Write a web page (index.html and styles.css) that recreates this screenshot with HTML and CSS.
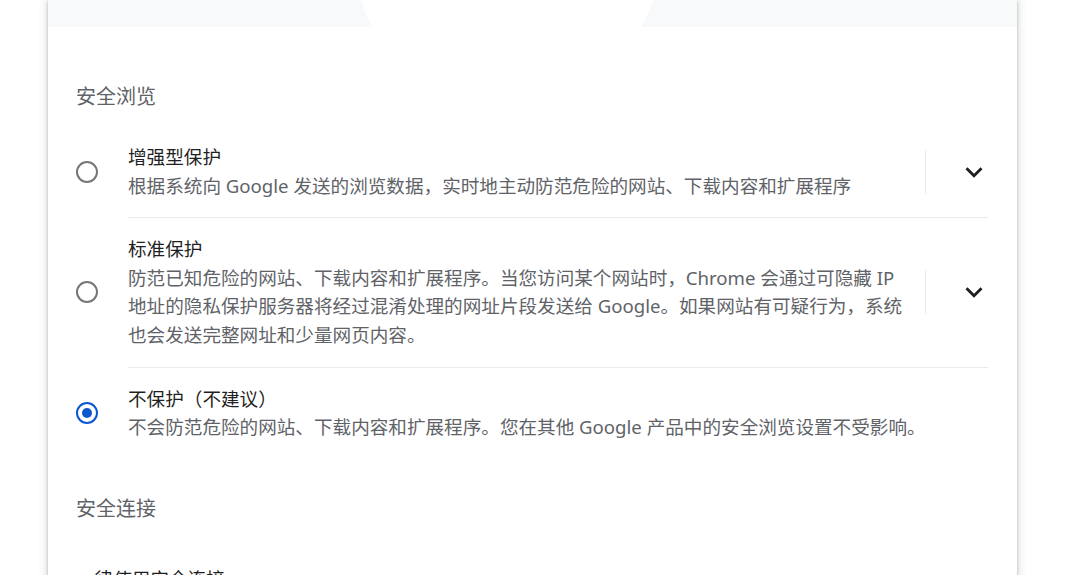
FILE: index.html
```html
<!DOCTYPE html>
<html lang="zh-CN">
<head>
<meta charset="utf-8">
<title>安全</title>
<link rel="stylesheet" href="styles.css">
</head>
<body>
<div class="card">
  <div class="band">
    <svg class="tab" width="969" height="27" viewBox="0 0 969 27" aria-hidden="true">
      <path d="M313,0 C316,9 319,19 324,27 L593,27 C598,19 602,9 605,0 Z" fill="#ffffff"/>
    </svg>
  </div>

  <h2 class="section-title first">安全浏览</h2>

  <div class="row">
    <span class="radio"></span>
    <div class="content">
      <div class="text">
        <div class="label">增强型保护</div>
        <div class="desc">根据系统向 Google 发送的浏览数据，实时地主动防范危险的网站、下载内容和扩展程序</div>
      </div>
      <span class="sep"></span>
      <svg class="chev" width="34" height="34" viewBox="0 0 24 24" aria-hidden="true"><path d="M16.59 8.59L12 13.17 7.41 8.59 6 10l6 6 6-6z" fill="#1f1f1f"/></svg>
    </div>
  </div>

  <div class="row">
    <span class="radio"></span>
    <div class="content bordered">
      <div class="text">
        <div class="label">标准保护</div>
        <div class="desc">防范已知危险的网站、下载内容和扩展程序。当您访问某个网站时，Chrome 会通过可隐藏 IP 地址的隐私保护服务器将经过混淆处理的网址片段发送给 Google。如果网站有可疑行为，系统也会发送完整网址和少量网页内容。</div>
      </div>
      <span class="sep"></span>
      <svg class="chev" width="34" height="34" viewBox="0 0 24 24" aria-hidden="true"><path d="M16.59 8.59L12 13.17 7.41 8.59 6 10l6 6 6-6z" fill="#1f1f1f"/></svg>
    </div>
  </div>

  <div class="row">
    <span class="radio checked"></span>
    <div class="content bordered">
      <div class="text">
        <div class="label">不保护（不建议）</div>
        <div class="desc">不会防范危险的网站、下载内容和扩展程序。您在其他 Google 产品中的安全浏览设置不受影响。</div>
      </div>
    </div>
  </div>

  <h2 class="section-title second">安全连接</h2>

  <div class="plain-row">
    <div class="label">一律使用安全连接</div>
  </div>
</div>
</body>
</html>
```

FILE: styles.css
```css
html, body {
  margin: 0;
  padding: 0;
  background: #ffffff;
  overflow: hidden;
  height: 575px;
}

body {
  font-family: "Noto Sans", "Noto Sans CJK SC", sans-serif;
  font-size: 18.6px;
  line-height: 28.6px;
  color: #5f6368;
}

.card {
  margin-left: 48px;
  width: 969px;
  height: 700px;
  background: #ffffff;
  box-shadow: 0 1px 3px rgba(60, 64, 67, 0.3), 0 2px 8px 2px rgba(60, 64, 67, 0.15);
}

.band {
  position: relative;
  height: 27px;
  background: #f8f9fa;
}

.tab {
  position: absolute;
  left: 0;
  top: 0;
  display: block;
}

.section-title {
  margin: 0;
  padding-left: 28px;
  font-size: 20px;
  line-height: 28px;
  font-weight: 400;
  color: #5f6368;
}

.section-title.first {
  margin-top: 56px;
  margin-bottom: 15px;
}

.section-title.second {
  margin-top: 36px;
}

.row {
  display: flex;
  align-items: center;
  padding-left: 28px;
  padding-right: 29px;
}

.radio {
  flex: none;
  box-sizing: border-box;
  width: 22px;
  height: 22px;
  border: 2.5px solid #747775;
  border-radius: 50%;
  margin-right: 30px;
  display: flex;
  align-items: center;
  justify-content: center;
}

.radio.checked {
  border-color: #0b57d0;
}

.radio.checked::after {
  content: "";
  width: 10px;
  height: 10px;
  border-radius: 50%;
  background: #0b57d0;
}

.content {
  flex: 1;
  display: flex;
  align-items: center;
  padding: 17px 0;
  min-width: 0;
}

.content.bordered {
  border-top: 1px solid #e8eaed;
}

.text {
  flex: 1;
  min-width: 0;
}

.label {
  color: #1f1f1f;
}

.desc {
  color: #5f6368;
}

.sep {
  flex: none;
  width: 1px;
  height: 44px;
  background: #e8eaed;
  margin-left: 19px;
}

.chev {
  flex: none;
  display: block;
  margin-left: 31px;
  margin-right: -3px;
}

.plain-row {
  padding: 42px 28px 0;
}
```
